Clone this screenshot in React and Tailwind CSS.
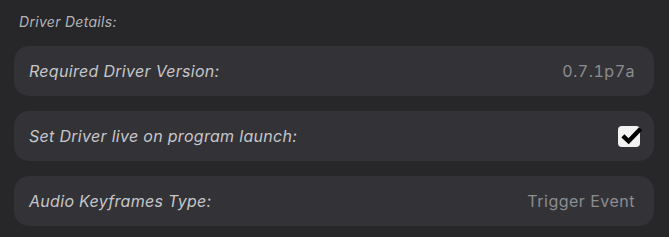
export default function App() {
  const rows = [
    { label: "Required Driver Version:", value: "0.7.1p7a" },
    { label: "Set Driver live on program launch:", checked: true },
    { label: "Audio Keyframes Type:", value: "Trigger Event" },
  ];

  return (
    <div className="h-[237px] w-[669px] bg-[#27272a] px-[14px] pt-[13px] font-['Inter','Liberation_Sans',sans-serif]">
      <p className="pl-[5px] text-[14px] italic leading-[18px] tracking-[0.3px] text-[#b4b4b8]">Driver Details:</p>
      <div className="mt-[15px] flex w-[640px] flex-col gap-[15px]">
        {rows.map((row) => (
          <div
            key={row.label}
            className="flex h-[50px] items-center justify-between rounded-[15px] bg-[#333337] pl-[15px] pr-[19px]"
          >
            <span className="text-[16px] italic tracking-[0.3px] text-[#c6c6ca]">{row.label}</span>
            {row.checked ? (
              <span className="relative mr-[-5px] flex h-[21px] w-[22px] items-center justify-center rounded-[4px] bg-[#f2f2f2]">
                <svg viewBox="0 0 24 24" className="absolute left-[2px] top-[-2px] h-[23px] w-[23px]">
                  <path d="M3 12.5 L9 18 L21.5 5" fill="none" stroke="#000" strokeWidth="4.6" strokeLinecap="butt" strokeLinejoin="miter" />
                </svg>
              </span>
            ) : (
              <span className="text-[16px] tabular-nums tracking-[0.5px] text-[#8c8c91]">{row.value}</span>
            )}
          </div>
        ))}
      </div>
    </div>
  );
}
